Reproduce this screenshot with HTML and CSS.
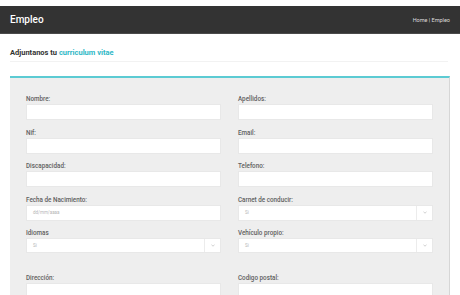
FILE: index.html
```html
<!DOCTYPE html>
<html lang="es">

<head>
    <meta charset="UTF-8">
    <meta name="viewport" content="width=device-width, initial-scale=1.0">
    <title>Empleo</title>
    <link rel="stylesheet" href="styles.css">
</head>

<body>
    <!-- Cabecera -->
    <div id="topbar">
        <div class="brand">Empleo</div>
        <div class="crumbs">Home | Empleo</div>
    </div>

    <!-- Titulo -->
    <div id="intro">
        Adjuntanos tu <span class="accent">curriculum vitae</span>
    </div>

    <!-- Formulario -->
    <div id="panel">
        <div class="grid">
            <div class="field">
                <label>Nombre:</label>
                <div class="input"></div>
            </div>
            <div class="field">
                <label>Apellidos:</label>
                <div class="input"></div>
            </div>
            <div class="field">
                <label>Nif:</label>
                <div class="input"></div>
            </div>
            <div class="field">
                <label>Email:</label>
                <div class="input"></div>
            </div>
            <div class="field">
                <label>Discapacidad:</label>
                <div class="input"></div>
            </div>
            <div class="field">
                <label>Telefono:</label>
                <div class="input"></div>
            </div>
            <div class="field">
                <label>Fecha de Nacimiento:</label>
                <div class="input"><span class="ph">dd/mm/aaaa</span></div>
            </div>
            <div class="field">
                <label>Carnet de conducir:</label>
                <div class="input select"><span class="ph">Si</span><span class="arrow"><svg width="4" height="3" viewBox="0 0 4 3"><path d="M0.5 0.8 L2 2.2 L3.5 0.8" fill="none" stroke="#b0b0b0" stroke-width="0.6"/></svg></span></div>
            </div>
            <div class="field">
                <label>Idiomas</label>
                <div class="input select short"><span class="ph">Si</span><span class="arrow"><svg width="4" height="3" viewBox="0 0 4 3"><path d="M0.5 0.8 L2 2.2 L3.5 0.8" fill="none" stroke="#b0b0b0" stroke-width="0.6"/></svg></span></div>
            </div>
            <div class="field">
                <label>Vehículo propio:</label>
                <div class="input select short"><span class="ph">Si</span><span class="arrow"><svg width="4" height="3" viewBox="0 0 4 3"><path d="M0.5 0.8 L2 2.2 L3.5 0.8" fill="none" stroke="#b0b0b0" stroke-width="0.6"/></svg></span></div>
            </div>
            <div class="field spaced">
                <label>Dirección:</label>
                <div class="input"></div>
            </div>
            <div class="field spaced">
                <label>Codigo postal:</label>
                <div class="input"></div>
            </div>
        </div>
    </div>
</body>

</html>
```

FILE: styles.css
```css
body {
    margin: 0;
    padding: 6px 0 0 0;
    background-color: white;
    font-family: Roboto, "Liberation Sans", sans-serif;
    overflow: hidden;
}

#topbar {
    height: 27px;
    background-color: #333333;
    border-bottom: 1px solid #4a4a4a;
    display: flex;
    align-items: center;
    justify-content: space-between;
    padding: 0 10px;
    color: white;
}

.brand {
    font-size: 10px;
    font-weight: 500;
}

.crumbs {
    font-size: 5.5px;
    color: #dddddd;
}

#intro {
    margin: 0 12px 0 10px;
    padding: 14px 0 4px 0;
    font-size: 7.5px;
    font-weight: 700;
    color: #333333;
    border-bottom: 1px solid #f2f2f2;
}

.accent {
    color: #2fb8c6;
}

#panel {
    margin: 14px 10px 0 10px;
    background-color: #eeeeee;
    border-top: 2px solid #5ccbd3;
    border-right: 1px solid #d6d6d6;
    padding: 17px 16px 20px 16px;
}

.grid {
    display: grid;
    grid-template-columns: 1fr 1fr;
    column-gap: 17px;
    row-gap: 8.5px;
}

.field label {
    display: block;
    height: 8px;
    line-height: 8px;
    margin-bottom: 1px;
    font-size: 6.3px;
    font-weight: 500;
    color: #606060;
}

.input {
    height: 16px;
    box-sizing: border-box;
    background-color: white;
    border: 1px solid #e8e8e8;
    display: flex;
    align-items: center;
    padding-left: 6px;
    font-size: 4.5px;
}

.short {
    height: 15px;
}

.ph {
    color: #b5b5b5;
    flex: 1;
}

.select .arrow {
    width: 15px;
    height: 100%;
    border-left: 1px solid #ececec;
    display: flex;
    align-items: center;
    justify-content: center;
}

.spaced {
    margin-top: 12px;
}
```
